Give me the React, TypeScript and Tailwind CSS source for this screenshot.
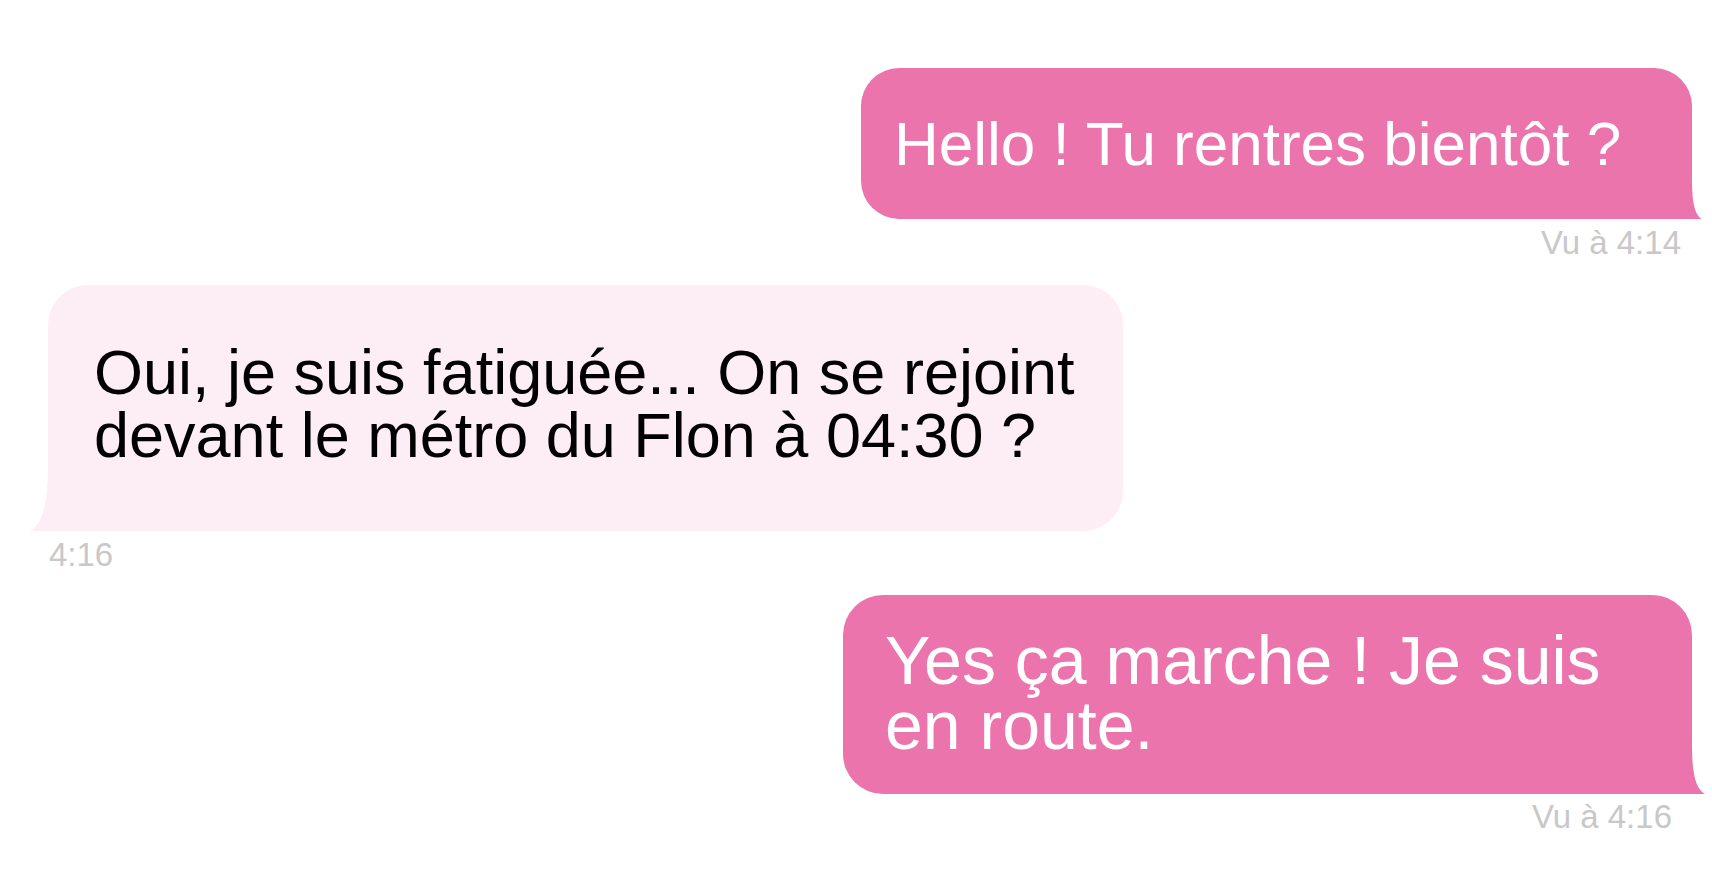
import React from "react";

const PINK = "#ec74ac";
const BLUSH = "#fdedf4";

const TailRight: React.FC<{ w: number; h: number; color: string }> = ({ w, h, color }) => (
  <svg
    className="absolute bottom-0"
    style={{ right: -w }}
    width={w}
    height={h}
    viewBox={`0 0 ${w} ${h}`}
  >
    <path d={`M0 0 C0 ${h * 0.62} ${w * 0.3} ${h * 0.9} ${w} ${h} L0 ${h} Z`} fill={color} />
  </svg>
);

const TailLeft: React.FC<{ w: number; h: number; color: string }> = ({ w, h, color }) => (
  <svg
    className="absolute bottom-0"
    style={{ left: -w }}
    width={w}
    height={h}
    viewBox={`0 0 ${w} ${h}`}
  >
    <path d={`M${w} 0 C${w} ${h * 0.6} ${w * 0.7} ${h * 0.9} 0 ${h} L${w} ${h} Z`} fill={color} />
  </svg>
);

export default function App() {
  return (
    <div className="min-h-screen w-full bg-white font-['Liberation_Sans',Arial,sans-serif] flex flex-col pt-[68px]">
      {/* outgoing 1 */}
      <div className="flex flex-col items-end pr-[20px]">
        <div className="relative w-[831px] rounded-[38px] rounded-br-none bg-[#ec74ac] pl-[33px] pr-[40px] pt-[45px] pb-[44px]">
          <p className="text-[62px] leading-[62px] text-white whitespace-nowrap">Hello ! Tu rentres bientôt ?</p>
          <TailRight w={10} h={40} color={PINK} />
        </div>
        <span className="mt-[6px] pr-[11px] text-[33px] leading-[36px] text-[#c8c8c8]">Vu à 4:14</span>
      </div>

      {/* incoming */}
      <div className="flex flex-col items-start pl-[48px] mt-[24px]">
        <div className="relative w-[1075px] rounded-[40px] rounded-bl-none bg-[#fdedf4] pl-[46px] pr-[36px] pt-[56px] pb-[64px]">
          <p className="text-[63px] leading-[63px] text-black">
            Oui, je suis fatiguée... On se rejoint devant le métro du Flon à 04:30 ?
          </p>
          <TailLeft w={18} h={68} color={BLUSH} />
        </div>
        <span className="mt-[6px] pl-[1px] text-[33px] leading-[36px] text-[#c8c8c8]">4:16</span>
      </div>

      {/* outgoing 2 */}
      <div className="flex flex-col items-end pr-[20px] mt-[22px]">
        <div className="relative w-[849px] rounded-[40px] rounded-br-none bg-[#ec74ac] pl-[42px] pr-[50px] pt-[33px] pb-[36px]">
          <p className="text-[68px] leading-[65px] text-white">Yes ça marche ! Je suis en route.</p>
          <TailRight w={13} h={50} color={PINK} />
        </div>
        <span className="mt-[5px] pr-[20px] text-[33px] leading-[36px] text-[#c8c8c8]">Vu à 4:16</span>
      </div>
    </div>
  );
}
